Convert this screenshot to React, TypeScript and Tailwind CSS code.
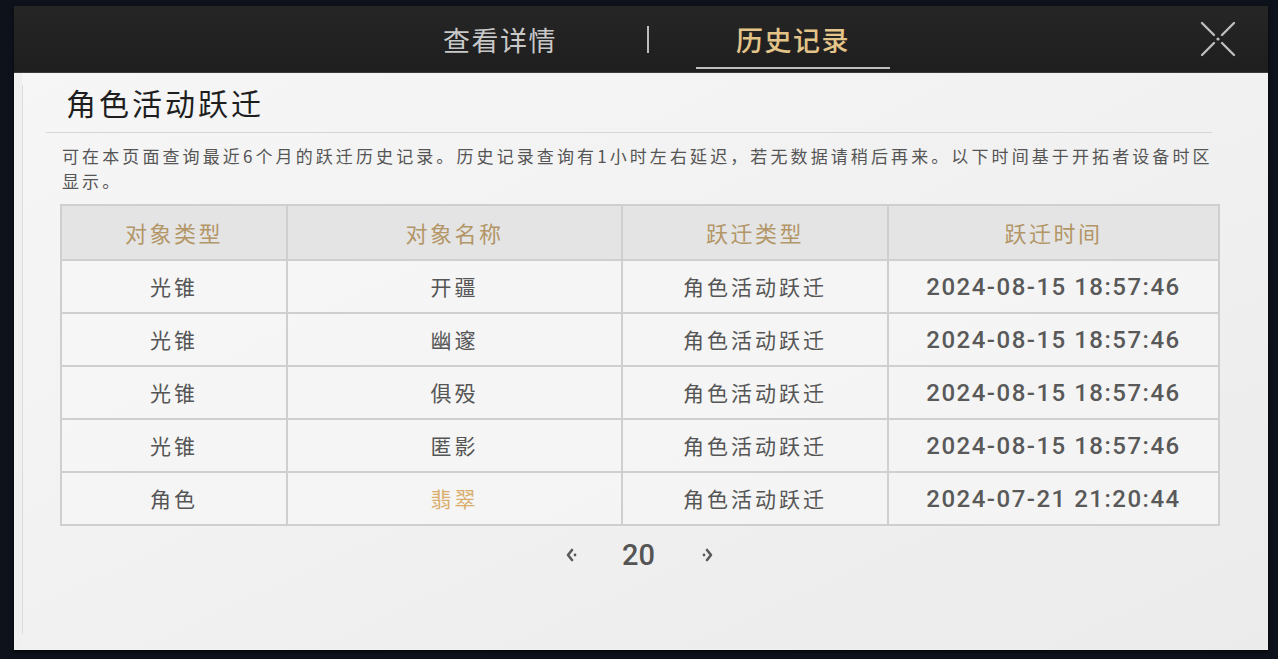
import React from 'react';

const rows = [
  { type: '光锥', name: '开疆', kind: '角色活动跃迁', time: '2024-08-15 18:57:46' },
  { type: '光锥', name: '幽邃', kind: '角色活动跃迁', time: '2024-08-15 18:57:46' },
  { type: '光锥', name: '俱殁', kind: '角色活动跃迁', time: '2024-08-15 18:57:46' },
  { type: '光锥', name: '匿影', kind: '角色活动跃迁', time: '2024-08-15 18:57:46' },
  { type: '角色', name: '翡翠', kind: '角色活动跃迁', time: '2024-07-21 21:20:44', gold: true },
];

const cjk = "font-['Noto_Sans_CJK_SC',sans-serif]";

const CloseIcon = () => (
  <svg width="38" height="38" viewBox="0 0 38 38" fill="none" stroke="#bdbdbd" strokeWidth="2.4" strokeLinecap="round">
    <line x1="3" y1="3" x2="15" y2="15" />
    <line x1="35" y1="3" x2="23" y2="15" />
    <line x1="3" y1="35" x2="15" y2="23" />
    <line x1="35" y1="35" x2="23" y2="23" />
    <circle cx="19" cy="19" r="1.6" fill="#bdbdbd" stroke="none" />
  </svg>
);

const Chevron = ({ dir }: { dir: 'left' | 'right' }) => (
  <svg width="14" height="18" viewBox="0 0 14 18" fill="none" stroke="#5a5a5a" strokeWidth="2.6" strokeLinecap="round" strokeLinejoin="round">
    {dir === 'left' ? (
      <>
        <polyline points="7,4 3,9 7,14" />
        <circle cx="10" cy="9" r="1.4" fill="#5a5a5a" stroke="none" />
      </>
    ) : (
      <>
        <polyline points="7,4 11,9 7,14" />
        <circle cx="4" cy="9" r="1.4" fill="#5a5a5a" stroke="none" />
      </>
    )}
  </svg>
);

export default function App() {
  return (
    <div className={`w-[1278px] h-[659px] bg-[#0e121a] pt-[6px] pl-[14px] pr-[10px] pb-[9px] ${cjk}`}>
      <div className="w-full h-full flex flex-col shadow-[0_2px_4px_rgba(0,0,0,0.6)]">
        {/* header */}
        <div className="h-[67px] flex items-center bg-gradient-to-b from-[#262626] to-[#1e1e1e] border-b border-[#3a3a3a]">
          <div className="ml-[386px] w-[200px] text-center text-[27px] tracking-[1.5px] text-[#c8c8c8] leading-none">查看详情</div>
          <div className="ml-[47px] w-[2px] h-[27px] bg-[#bdbdbd]" />
          <div className="ml-[47px] w-[194px] self-stretch flex items-center justify-center relative">
            <span className="text-[27px] tracking-[1.5px] text-[#e3c489] leading-none font-medium">历史记录</span>
            <div className="absolute left-0 right-0 bottom-[3px] h-[2px] bg-[#bfbfbf]" />
          </div>
          <div className="ml-auto mr-[31px] flex items-center">
            <CloseIcon />
          </div>
        </div>

        {/* body */}
        <div className="flex-1 bg-gradient-to-br from-[#f6f6f6] via-[#f1f1f1] to-[#ebebeb] border-l-[8px] border-l-[#f0f0f0] relative">
          <div className="absolute left-0 top-[12px] bottom-[16px] w-px bg-[#dcdcdc]" />
          <div className="ml-[24px] w-[1166px]">
            <div className="pl-[20px] pt-[9px] h-[59px] text-[30px] tracking-[3px] text-[#1e1e1e] leading-[40px]">角色活动跃迁</div>
            <div className="h-px bg-[#d6d6d6]" />
            <div className="pl-[16px] pt-[10px] text-[17px] tracking-[3.1px] leading-[25px] text-[#555] whitespace-nowrap">
              可在本页面查询最近6个月的跃迁历史记录。历史记录查询有1小时左右延迟，若无数据请稍后再来。以下时间基于开拓者设备时区
              <br />
              显示。
            </div>
            <table className="ml-[14px] mt-[11px] w-[1158px] border-collapse border-2 border-[#cfcfcf] table-fixed">
              <colgroup>
                <col className="w-[226px]" />
                <col className="w-[335px]" />
                <col className="w-[266px]" />
                <col className="w-[331px]" />
              </colgroup>
              <thead>
                <tr className="h-[55px] bg-[#e4e4e4]">
                  {['对象类型', '对象名称', '跃迁类型', '跃迁时间'].map((h) => (
                    <th key={h} className="border-2 border-[#cfcfcf] text-[22px] tracking-[2.5px] font-normal text-[#b39667]">
                      {h}
                    </th>
                  ))}
                </tr>
              </thead>
              <tbody>
                {rows.map((r, i) => (
                  <tr key={i} className="h-[53px] bg-[#f7f7f7]/70">
                    <td className="border-2 border-[#cfcfcf] text-center text-[21px] tracking-[3px] text-[#555]">{r.type}</td>
                    <td className={`border-2 border-[#cfcfcf] text-center text-[21px] tracking-[3px] ${r.gold ? 'text-[#d9ad6c]' : 'text-[#555]'}`}>
                      {r.name}
                    </td>
                    <td className="border-2 border-[#cfcfcf] text-center text-[21px] tracking-[3px] text-[#555]">{r.kind}</td>
                    <td className="border-2 border-[#cfcfcf] text-center text-[24px] font-medium text-[#595959] font-['Roboto',sans-serif] tracking-[1.5px]">
                      {r.time}
                    </td>
                  </tr>
                ))}
              </tbody>
            </table>
            <div className="mt-[12px] ml-[14px] w-[1158px] flex items-center h-[34px]">
              <div className="ml-[505px] flex items-center">
                <Chevron dir="left" />
              </div>
              <div className="ml-[43px] text-[29px] font-medium text-[#555] leading-none font-['Roboto',sans-serif]">
                20
              </div>
              <div className="ml-[45px] flex items-center">
                <Chevron dir="right" />
              </div>
            </div>
          </div>
        </div>
      </div>
    </div>
  );
}
